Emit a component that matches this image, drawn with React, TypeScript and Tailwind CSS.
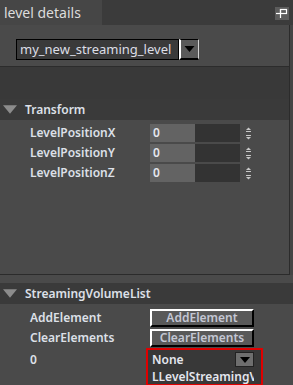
import React from "react";

function Arrow({ className }: { className?: string }) {
    return (
        <svg viewBox="0 0 10 6" className={className}>
            <path d="M0 0 L10 0 L5 6 Z" fill="currentColor" />
        </svg>
    );
}

function Spinner() {
    return (
        <svg viewBox="0 0 7 13" className="w-[7px] h-[13px] text-[#c8c8c8]">
            <path d="M3.5 0.5 L6 3 L1 3 Z" fill="currentColor" />
            <path d="M1 4.5 L6 4.5" stroke="currentColor" strokeWidth="1" />
            <path d="M1 8.5 L6 8.5" stroke="currentColor" strokeWidth="1" />
            <path d="M1 10 L6 10 L3.5 12.5 Z" fill="currentColor" />
        </svg>
    );
}

function GroupHeader({ title }: { title: string }) {
    return (
        <div className="flex items-center h-[21px] bg-[#3a3a3a]">
            <Arrow className="ml-[3px] w-[14px] h-[9px] text-[#8c8c8c]" />
            <span className="ml-[8px] text-[12px] font-semibold text-[#dde0e8]">{title}</span>
        </div>
    );
}

function NumberRow({ label }: { label: string }) {
    return (
        <div className="flex items-center h-[20px]">
            <span className="w-[150px] pl-[30px] text-[12px] font-semibold text-[#dde0e8]">{label}</span>
            <div className="flex h-[18px] w-[90px] bg-[#333333]">
                <div className="w-[45px] h-full bg-[#636363] pl-[3px] text-[12px] font-semibold leading-[18px] text-[#e4e6ee]">0</div>
            </div>
            <div className="ml-[5px]">
                <Spinner />
            </div>
        </div>
    );
}

function BevelButton({ text }: { text: string }) {
    return (
        <div className="w-[104px] h-[18px] bg-[#595959] border-t-2 border-l-2 border-t-white border-l-white border-b-2 border-r-2 border-b-black border-r-black text-center text-[12px] font-semibold leading-[14px] text-[#c4c7d4]">
            {text}
        </div>
    );
}

export default function App() {
    return (
        <div className="w-[293px] h-[385px] overflow-hidden bg-[#444444] font-['Noto_Sans',sans-serif]">
            {/* tab bar */}
            <div className="flex justify-between h-[25px] bg-[#3b3b3b]">
                <div className="w-[102px] bg-[#464646] pl-[4px] text-[14px] leading-[25px] text-[#dcdcdc]">level details</div>
                <div className="mt-[7px] mr-[4px] w-[14px] h-[13px] bg-[#5c5c5c] flex items-center justify-center">
                    <svg viewBox="0 0 14 13" className="w-[14px] h-[13px]">
                        <path d="M1 6.5 H5.5" stroke="white" strokeWidth="1.2" />
                        <rect x="5.5" y="2.5" width="6" height="4" fill="none" stroke="white" strokeWidth="1.2" />
                        <path d="M5.5 2 V11" stroke="white" strokeWidth="1.2" />
                    </svg>
                </div>
            </div>

            <div className="w-[290px] border-r border-[#2b2b2b]">
                {/* level selector */}
                <div className="h-[42px] bg-[#4a4a4a] pt-[14px] pl-[16px] border-b border-[#2c2c2c]">
                    <div className="flex h-[21px]">
                        <div className="w-[163px] h-full bg-[#3a3a3a] border border-black pl-[3px] text-[13px] leading-[19px] whitespace-nowrap text-[#dcdee6]">
                            my_new_streaming_level
                        </div>
                        <div className="w-[20px] h-full bg-[#5a5a5a] border-l-2 border-l-white border-t border-t-black border-b-2 border-b-black border-r border-r-[#d0d0d0] flex items-center justify-center">
                            <Arrow className="w-[11px] h-[6px] text-black" />
                        </div>
                    </div>
                </div>

                {/* Transform */}
                <div className="bg-[#393939] pt-[32px]">
                    <GroupHeader title="Transform" />
                </div>
                <div className="h-[155px] bg-[#4a4a4a] pt-[3px] border-b border-[#2b2b2b]">
                    <NumberRow label="LevelPositionX" />
                    <NumberRow label="LevelPositionY" />
                    <NumberRow label="LevelPositionZ" />
                </div>
            </div>

            <div className="h-[8px] bg-[#4a4a4a]" />

            {/* StreamingVolumeList */}
            <GroupHeader title="StreamingVolumeList" />
            <div className="bg-[#4a4a4a] h-[81px] pt-[3px]">
                <div className="flex items-center h-[21px]">
                    <span className="w-[150px] pl-[30px] text-[12px] font-semibold text-[#dde0e8]">AddElement</span>
                    <BevelButton text="AddElement" />
                </div>
                <div className="flex items-center h-[20px]">
                    <span className="w-[150px] pl-[30px] text-[12px] font-semibold text-[#dde0e8]">ClearElements</span>
                    <BevelButton text="ClearElements" />
                </div>
                <div className="flex">
                    <span className="w-[146px] pl-[30px] pt-[3px] text-[12px] font-semibold text-[#dde0e8]">0</span>
                    <div className="w-[117px] h-[38px] border-2 border-[#e00000] bg-[#383838]">
                        <div className="w-[106px] overflow-hidden">
                            <div className="flex items-center justify-between h-[17px] mt-[1px]">
                                <span className="pl-[4px] text-[12px] font-semibold text-[#e4e6ee]">None</span>
                                <div className="w-[19px] h-[15px] bg-[#6e6e6e] border border-[#222] flex items-center justify-center">
                                    <Arrow className="w-[10px] h-[6px] text-black" />
                                </div>
                            </div>
                            <div className="pl-[4px] text-[12px] font-semibold leading-[17px] whitespace-nowrap text-[#e4e6ee]">
                                LLevelStreamingVolume
                            </div>
                        </div>
                    </div>
                </div>
            </div>
        </div>
    );
}
